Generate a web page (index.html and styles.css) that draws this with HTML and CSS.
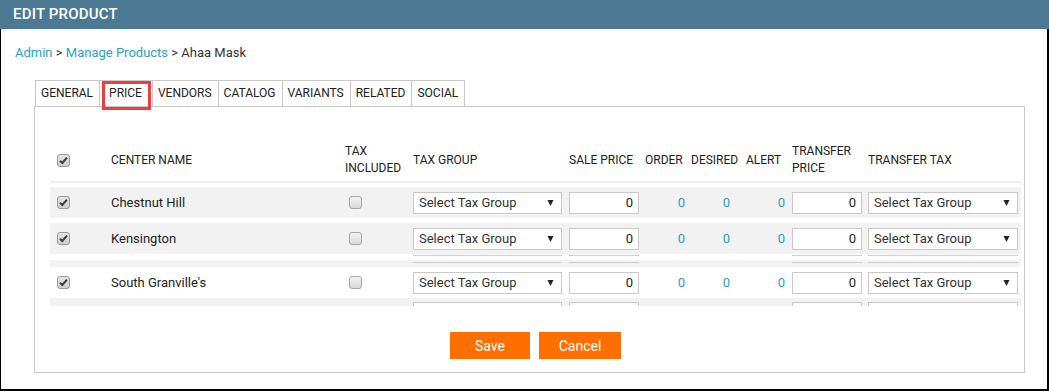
FILE: index.html
```html
<!DOCTYPE html>
<html>
<head>
<meta charset="utf-8">
<link rel="stylesheet" href="styles.css">
</head>
<body>
<div class="topbar">EDIT PRODUCT</div>
<div class="main">
  <div class="crumbs"><a class="lnk">Admin</a> &gt; <a class="lnk">Manage Products</a> &gt; Ahaa Mask</div>
  <div class="tabs">
    <div class="tab">GENERAL</div>
    <div class="tab tab-hl">PRICE</div>
    <div class="tab">VENDORS</div>
    <div class="tab">CATALOG</div>
    <div class="tab">VARIANTS</div>
    <div class="tab">RELATED</div>
    <div class="tab">SOCIAL</div>
  </div>
  <div class="panel">
    <div class="scroll">
      <div class="trow thead">
        <div class="c-cb"><span class="cb on"><svg width="11" height="11" viewBox="0 0 11 11"><path d="M2 5.8 L4.3 8 L9 2.6" fill="none" stroke="#3d3d3d" stroke-width="2"/></svg></span></div>
        <div>CENTER NAME</div>
        <div class="two">TAX<br>INCLUDED</div>
        <div>TAX GROUP</div>
        <div>SALE PRICE</div>
        <div>ORDER</div>
        <div>DESIRED</div>
        <div>ALERT</div>
        <div class="two">TRANSFER<br>PRICE</div>
        <div>TRANSFER TAX</div>
      </div>
      <div class="sep"></div>
      <div class="gap4"></div>

      <div class="trow grey">
        <div class="c-cb"><span class="cb on"><svg width="11" height="11" viewBox="0 0 11 11"><path d="M2 5.8 L4.3 8 L9 2.6" fill="none" stroke="#3d3d3d" stroke-width="2"/></svg></span></div>
        <div class="name">Chestnut Hill</div>
        <div class="c-tax"><span class="cb"></span></div>
        <div><div class="sel"><span>Select Tax Group</span><svg width="7" height="8" viewBox="0 0 7 8"><polygon points="0.5,1 6.5,1 3.5,7" fill="#222"/></svg></div></div>
        <div><div class="num">0</div></div>
        <div class="z z-order">0</div>
        <div class="z z-des">0</div>
        <div class="z z-alert">0</div>
        <div><div class="num">0</div></div>
        <div><div class="sel sel-r"><span>Select Tax Group</span><svg width="7" height="8" viewBox="0 0 7 8"><polygon points="0.5,1 6.5,1 3.5,7" fill="#222"/></svg></div></div>
      </div>
      <div class="gap5"></div>

      <div class="trow grey">
        <div class="c-cb"><span class="cb on"><svg width="11" height="11" viewBox="0 0 11 11"><path d="M2 5.8 L4.3 8 L9 2.6" fill="none" stroke="#3d3d3d" stroke-width="2"/></svg></span></div>
        <div class="name">Kensington</div>
        <div class="c-tax"><span class="cb"></span></div>
        <div><div class="sel"><span>Select Tax Group</span><svg width="7" height="8" viewBox="0 0 7 8"><polygon points="0.5,1 6.5,1 3.5,7" fill="#222"/></svg></div></div>
        <div><div class="num">0</div></div>
        <div class="z z-order">0</div>
        <div class="z z-des">0</div>
        <div class="z z-alert">0</div>
        <div><div class="num">0</div></div>
        <div><div class="sel sel-r"><span>Select Tax Group</span><svg width="7" height="8" viewBox="0 0 7 8"><polygon points="0.5,1 6.5,1 3.5,7" fill="#222"/></svg></div></div>
      </div>

      <div class="trow sliver sl-a">
        <div></div><div></div><div></div>
        <div><div class="stub w-sel"></div></div>
        <div><div class="stub w-num"></div></div>
        <div></div><div></div><div></div>
        <div><div class="stub w-num"></div></div>
        <div><div class="stub w-selr"></div></div>
      </div>
      <div class="trow sliver sl-b grey">
        <div></div><div></div><div></div>
        <div><div class="stub w-sel"></div></div>
        <div><div class="stub w-num"></div></div>
        <div></div><div></div><div></div>
        <div><div class="stub w-num"></div></div>
        <div><div class="stub w-selr"></div></div>
      </div>

      <div class="trow">
        <div class="c-cb"><span class="cb on"><svg width="11" height="11" viewBox="0 0 11 11"><path d="M2 5.8 L4.3 8 L9 2.6" fill="none" stroke="#3d3d3d" stroke-width="2"/></svg></span></div>
        <div class="name">South Granville's</div>
        <div class="c-tax"><span class="cb"></span></div>
        <div><div class="sel"><span>Select Tax Group</span><svg width="7" height="8" viewBox="0 0 7 8"><polygon points="0.5,1 6.5,1 3.5,7" fill="#222"/></svg></div></div>
        <div><div class="num">0</div></div>
        <div class="z z-order">0</div>
        <div class="z z-des">0</div>
        <div class="z z-alert">0</div>
        <div><div class="num">0</div></div>
        <div><div class="sel sel-r"><span>Select Tax Group</span><svg width="7" height="8" viewBox="0 0 7 8"><polygon points="0.5,1 6.5,1 3.5,7" fill="#222"/></svg></div></div>
      </div>

      <div class="trow sliver sl-c grey">
        <div></div><div></div><div></div>
        <div><div class="stub box w-sel"></div></div>
        <div><div class="stub box w-num"></div></div>
        <div></div><div></div><div></div>
        <div><div class="stub box w-num"></div></div>
        <div><div class="stub box w-selr"></div></div>
      </div>
    </div>
    <div class="actions">
      <button class="btn btn-save">Save</button>
      <button class="btn btn-cancel">Cancel</button>
    </div>
  </div>
</div>
</body>
</html>
```
FILE: styles.css
```css
html, body {
  margin: 0;
  padding: 0;
  background: #fff;
}
body {
  width: 1049px;
  height: 391px;
  overflow: hidden;
  font-family: Roboto, "Liberation Sans", Arial, sans-serif;
  color: #222;
}
.topbar {
  height: 29px;
  background: #4b7994;
  color: #fff;
  font-size: 15px;
  font-weight: 500;
  line-height: 29px;
  padding-left: 13px;
  letter-spacing: 0.2px;
}
.main {
  box-sizing: border-box;
  height: 362px;
  border-left: 1px solid #000;
  border-right: 2px solid #000;
  border-bottom: 2px solid #000;
  padding: 16px 0 0 14px;
}
.crumbs {
  font-size: 13px;
  line-height: 16px;
  color: #333;
}
.lnk {
  color: #2a9fc4;
  text-decoration: none;
}
.tabs {
  display: flex;
  margin: 19px 0 0 20px;
}
.tab {
  position: relative;
  height: 25px;
  line-height: 25px;
  font-size: 12px;
  padding: 0 6px 0 5px;
  border: 1px solid #c8c8c8;
  border-bottom: none;
  margin-right: -1px;
  color: #222;
}
.tab-hl {
  padding: 0 10px 0 9px;
}
.tab-hl::after {
  content: "";
  position: absolute;
  left: 2px;
  right: 1px;
  top: 0;
  bottom: -4px;
  border: 3px solid #ef3d3f;
}
.panel {
  margin-left: 19px;
  width: 991px;
  height: 267px;
  box-sizing: border-box;
  border: 1px solid #c8c8c8;
  padding: 32px 3px 0 15px;
}
.scroll {
  height: 167px;
  overflow: hidden;
}
.trow {
  display: grid;
  grid-template-columns: 61px 234px 68px 156px 76px 46px 55px 46px 76px 153px;
  align-items: center;
  height: 31px;
  font-size: 13px;
}
.thead {
  height: 42px;
  font-size: 12px;
  color: #222;
}
.two {
  line-height: 17px;
}
.sep {
  height: 2px;
  background: #efefef;
}
.gap4 { height: 4px; }
.gap5 { height: 5px; }
.grey { background: #f2f2f2; }
.c-cb { padding-left: 7px; display: flex; }
.c-tax { padding-left: 4px; display: flex; }
.cb {
  box-sizing: border-box;
  width: 13px;
  height: 13px;
  border: 1px solid #a6a6a6;
  border-radius: 3px;
  background: linear-gradient(#f3f3f3, #d9d9d9);
  display: flex;
  align-items: center;
  justify-content: center;
}
.cb.on {
  background: linear-gradient(#e4e4e4, #cfcfcf);
  border-color: #9a9a9a;
}
.name { color: #222; }
.sel {
  box-sizing: border-box;
  width: 149px;
  height: 22px;
  border: 1px solid #c9c9c9;
  background: #fff;
  display: flex;
  align-items: center;
  justify-content: space-between;
  padding: 0 7px 0 5px;
  color: #333;
  font-size: 13px;
}
.sel-r { width: 150px; }
.num {
  box-sizing: border-box;
  width: 70px;
  height: 22px;
  border: 1px solid #c9c9c9;
  background: #fff;
  text-align: right;
  padding-right: 5px;
  line-height: 20px;
  color: #222;
}
.z {
  color: #2a9fc4;
  text-align: right;
}
.z-order { padding-right: 6px; }
.z-des { padding-right: 16px; }
.z-alert { padding-right: 7px; }
.sliver {
  align-items: start;
}
.sl-a { height: 6px; }
.sl-b { height: 7px; }
.sl-c { height: 8px; }
.stub {
  box-sizing: border-box;
  border-top: 1px solid #cfcfcf;
}
.sl-a .stub { margin-top: 1px; }
.sl-b .stub { margin-top: 2px; }
.stub.box {
  margin-top: 4px;
  height: 10px;
  background: #fff;
  border: 1px solid #c9c9c9;
}
.w-sel { width: 149px; }
.w-selr { width: 150px; }
.w-num { width: 70px; }
.actions {
  display: flex;
  justify-content: center;
  gap: 9px;
  margin-top: 26px;
}
.btn {
  height: 27px;
  border: none;
  background: #ff6f00;
  color: #fff;
  font-family: Roboto, "Liberation Sans", Arial, sans-serif;
  font-size: 14px;
  padding: 0;
  cursor: pointer;
}
.btn-save { width: 80px; }
.btn-cancel { width: 82px; }
```
